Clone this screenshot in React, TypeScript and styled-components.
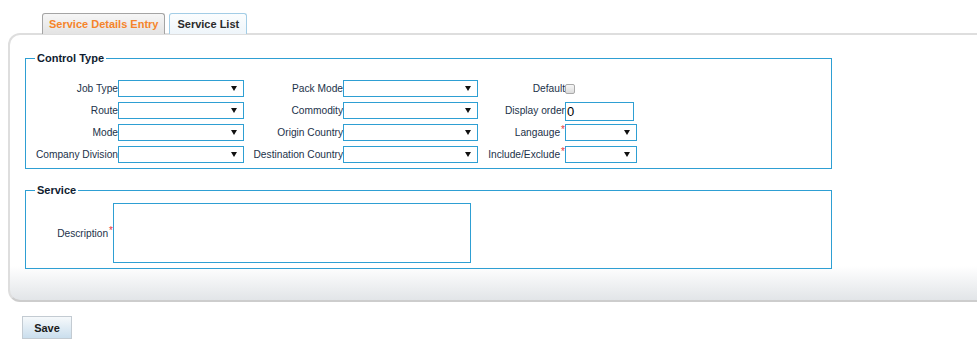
import React, { FC } from 'react'
import styled, { createGlobalStyle } from 'styled-components'

const GlobalStyle = createGlobalStyle`
  body {
    margin: 0;
    background: #fff;
    font-family: "Liberation Sans", Arial, sans-serif;
    overflow: hidden;
  }
`

const Page = styled.div`
  padding-top: 13px;
`

const Tabs = styled.div`
  display: flex;
  gap: 4px;
  margin-left: 42px;
  position: relative;
  z-index: 1;
  margin-bottom: -1px;
`

const Tab = styled.div<{ $active?: boolean }>`
  height: 20px;
  padding: 0 ${({ $active }) => ($active ? 6 : 7)}px;
  display: flex;
  align-items: center;
  font-size: 11px;
  font-weight: bold;
  border: 1px solid ${({ $active }) => ($active ? '#a4a4a4' : '#a3cde6')};
  border-bottom: none;
  border-radius: 3px 3px 0 0;
  color: ${({ $active }) => ($active ? '#f5842a' : '#2b2b2b')};
  background: ${({ $active }) =>
    $active
      ? 'linear-gradient(to bottom, #f6f6f6, #e3e3e3)'
      : 'linear-gradient(to bottom, #fbfdfe, #eef5fa)'};
`

const Panel = styled.div`
  margin-left: 8px;
  width: calc(100% + 20px);
  border: 2px solid #dedede;
  border-bottom-color: #cdcdcd;
  border-radius: 12px 0 0 12px;
  padding: 16px 0 31px 15px;
  background: linear-gradient(to bottom, #fff calc(100% - 34px), #e2e5e8 100%);
  box-sizing: border-box;
`

const Fieldset = styled.fieldset<{ $top?: number }>`
  width: 807px;
  box-sizing: border-box;
  margin: ${({ $top }) => $top ?? 0}px 0 0 0;
  padding: 0;
  border: 1px solid #2e9fd3;
`

const Legend = styled.legend`
  margin-left: 9px;
  padding: 0 2px;
  font-size: 11px;
  line-height: 14px;
  font-weight: bold;
  color: #0f1c30;
`

const Grid = styled.div`
  display: grid;
  grid-template-columns: 92px 126px 99px 135px 87px 72px;
  grid-auto-rows: 17px;
  row-gap: 5px;
  padding: 15px 0 5px 0;
`

const Label = styled.label`
  display: flex;
  align-items: center;
  justify-content: flex-end;
  font-size: 10.2px;
  color: #22324a;
  white-space: nowrap;
`

const Star = styled.span`
  color: #e8353b;
  font-size: 10px;
  position: relative;
  top: -3px;
  margin-left: 1px;
`

const SelectBox = styled.div<{ $w?: number }>`
  width: ${({ $w }) => ($w ? `${$w}px` : '100%')};
  height: 17px;
  box-sizing: border-box;
  border: 1px solid #2e9fd3;
  background: #fff;
  display: flex;
  align-items: center;
  justify-content: flex-end;
  padding-right: 6px;
`

const Check = styled.input`
  appearance: none;
  margin: 0;
  width: 10px;
  height: 10px;
  border: 1px solid #a9a9a9;
  border-radius: 2px;
  background: linear-gradient(to bottom, #f6f6f6, #dcdcdc);
  align-self: center;
`

const TextInput = styled.input`
  width: 69px;
  height: 19px;
  box-sizing: border-box;
  margin: 0;
  padding: 0 1px;
  border: 1px solid #2e9fd3;
  font-family: "Liberation Sans", Arial, sans-serif;
  font-size: 13px;
  color: #000;
  outline: none;
`

const CheckCell = styled.div`
  display: flex;
  align-items: center;
`

const ServiceRow = styled.div`
  display: grid;
  grid-template-columns: 87px 358px;
  padding: 6px 0 5px 0;
`

const TextArea = styled.textarea`
  width: 358px;
  height: 60px;
  box-sizing: border-box;
  margin: 0;
  border: 1px solid #2e9fd3;
  resize: none;
  outline: none;
`

const SaveButton = styled.button`
  margin: 14px 0 0 22px;
  width: 50px;
  height: 23px;
  border: 1px solid #c3cbd2;
  background: linear-gradient(to bottom, #f6f9fb, #cadeed);
  font-family: "Liberation Sans", Arial, sans-serif;
  font-size: 11px;
  font-weight: bold;
  color: #1a1a1a;
  padding: 0;
`

const Caret: FC = () => (
  <svg width="6" height="5" viewBox="0 0 6 5">
    <polygon points="0,0 6,0 3,5" fill="#111" />
  </svg>
)

const Select: FC<{ w?: number }> = ({ w }) => (
  <SelectBox $w={w}>
    <Caret />
  </SelectBox>
)

const Req: FC<{ text: string }> = ({ text }) => (
  <Label>
    <span>
      {text}
      <Star>*</Star>
    </span>
  </Label>
)

const App: FC = () => {
  return (
    <Page>
      <GlobalStyle />
      <Tabs>
        <Tab $active>Service Details Entry</Tab>
        <Tab>Service List</Tab>
      </Tabs>
      <Panel>
        <Fieldset>
          <Legend>Control Type</Legend>
          <Grid>
            <Label>Job Type</Label>
            <Select />
            <Label>Pack Mode</Label>
            <Select />
            <Label>Default</Label>
            <CheckCell>
              <Check type="checkbox" />
            </CheckCell>

            <Label>Route</Label>
            <Select />
            <Label>Commodity</Label>
            <Select />
            <Label>Display order</Label>
            <TextInput defaultValue="0" />

            <Label>Mode</Label>
            <Select />
            <Label>Origin Country</Label>
            <Select />
            <Req text="Langauge" />
            <Select />

            <Label>Company Division</Label>
            <Select />
            <Label>Destination Country</Label>
            <Select />
            <Req text="Include/Exclude" />
            <Select />
          </Grid>
        </Fieldset>

        <Fieldset $top={14}>
          <Legend>Service</Legend>
          <ServiceRow>
            <Req text="Description" />
            <TextArea />
          </ServiceRow>
        </Fieldset>
      </Panel>
      <SaveButton>Save</SaveButton>
    </Page>
  )
}

export default App
